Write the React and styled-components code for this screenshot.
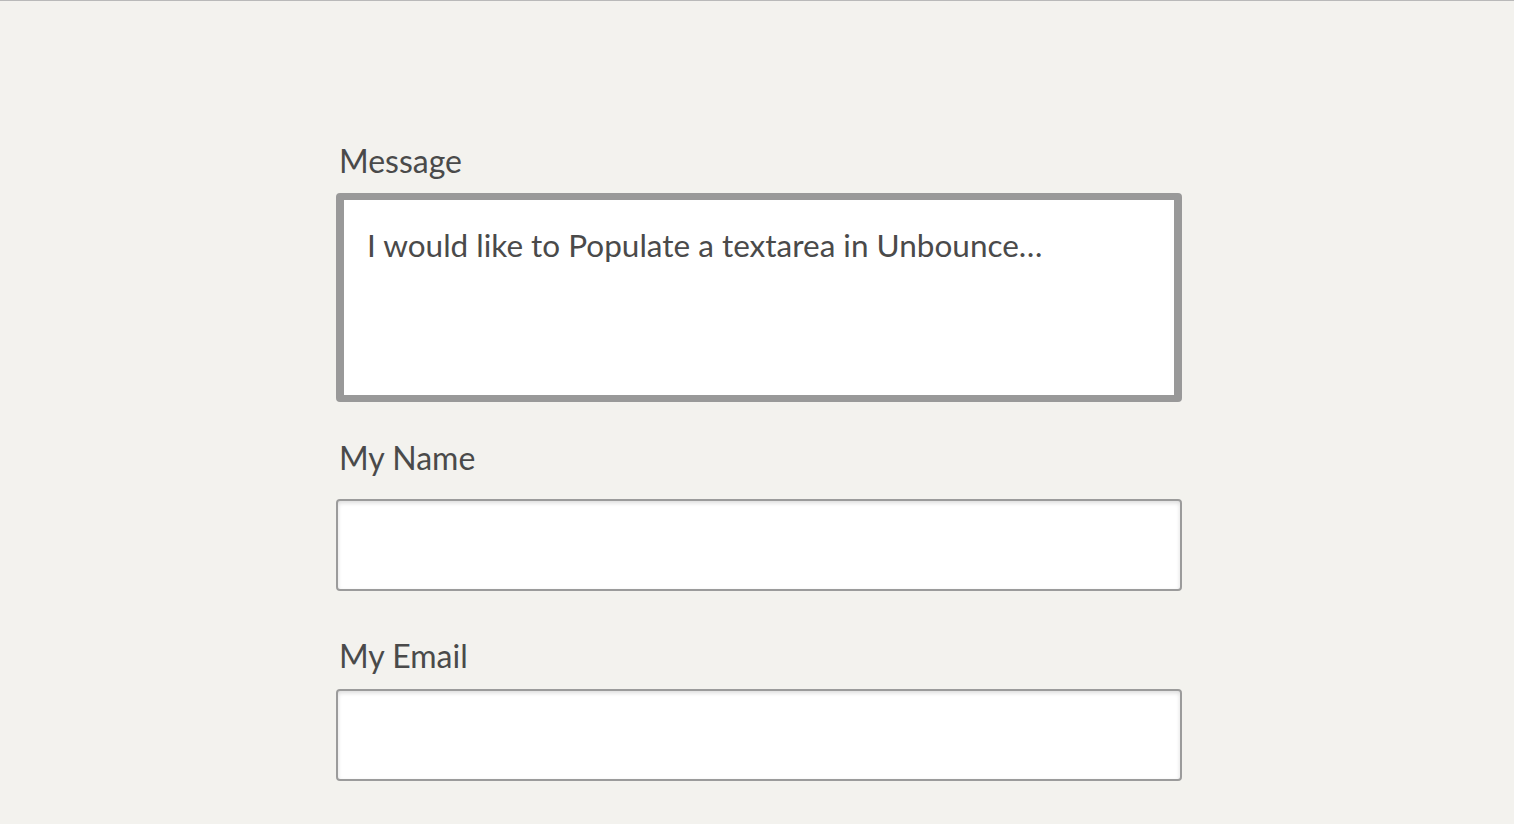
import React from "react";
import styled, { createGlobalStyle } from "styled-components";

const Global = createGlobalStyle`
  html, body { margin: 0; padding: 0; }
  body {
    background: #f3f2ee;
    font-family: Lato, "Open Sans", sans-serif;
    color: #4a4a4a;
  }
`;

const Page = styled.div`
  min-height: 824px;
  box-sizing: border-box;
  border-top: 1px solid #b9b9b9;
  display: flex;
  justify-content: flex-start;
  padding-left: 336px;
`;

const Form = styled.form`
  width: 846px;
  display: flex;
  flex-direction: column;
  padding-top: 142px;
`;

const Label = styled.label`
  font-size: 32px;
  line-height: 36px;
  padding-left: 3px;
  margin-top: ${(p) => p.$top || 0}px;
  margin-bottom: ${(p) => p.$gap || 0}px;
  color: #4a4a4a;
`;

const TextArea = styled.textarea`
  box-sizing: border-box;
  width: 100%;
  height: 209px;
  border: 7px solid #999999;
  border-left-width: 8px;
  border-right-width: 8px;
  border-radius: 4px;
  background: #fff;
  padding: 25px 20px 16px 23px;
  font-family: Lato, sans-serif;
  font-size: 31.5px;
  line-height: 40px;
  color: #4a4a4a;
  resize: none;
  outline: none;
`;

const Input = styled.input`
  box-sizing: border-box;
  width: 100%;
  height: 92px;
  border: 2px solid #9b9b9b;
  border-radius: 4px;
  background: #fff;
  box-shadow: inset 0 2px 4px rgba(0, 0, 0, 0.14);
  outline: none;
`;

export default function App() {
  return (
    <>
      <Global />
      <Page>
        <Form>
          <Label $gap={14}>Message</Label>
          <TextArea defaultValue="I would like to Populate a textarea in Unbounce…" />
          <Label $top={38} $gap={23}>My Name</Label>
          <Input type="text" />
          <Label $top={47} $gap={15}>My Email</Label>
          <Input type="email" />
        </Form>
      </Page>
    </>
  );
}
